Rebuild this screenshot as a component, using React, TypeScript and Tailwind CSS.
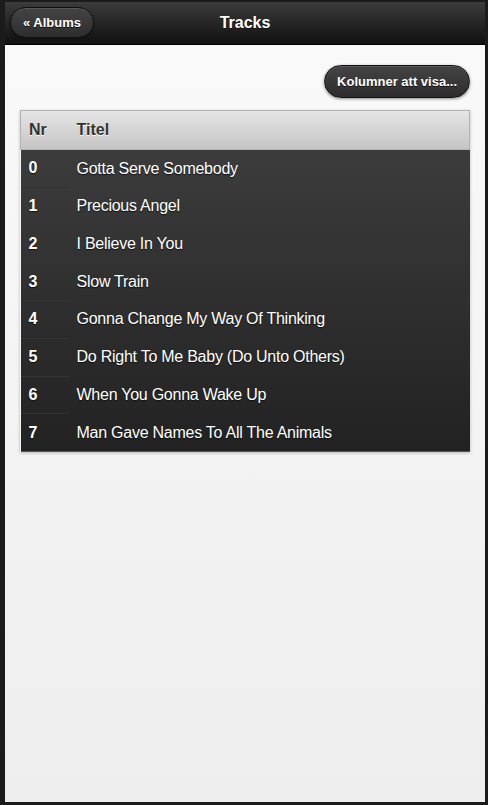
import React from 'react'

const tracks = [
  'Gotta Serve Somebody',
  'Precious Angel',
  'I Believe In You',
  'Slow Train',
  'Gonna Change My Way Of Thinking',
  'Do Right To Me Baby (Do Unto Others)',
  'When You Gonna Wake Up',
  'Man Gave Names To All The Animals',
]

export default function App() {
  return (
    <div className="h-[805px] w-[488px] bg-[#1b1b1b] pl-[5px] pr-[3px] pt-[2px] pb-[3px] font-['Liberation_Sans',Arial,sans-serif] overflow-hidden">
      <div className="flex h-full flex-col">
        {/* Header */}
        <header className="relative flex h-[43px] shrink-0 items-center justify-center border-b border-[#000] bg-gradient-to-b from-[#3c3c3c] to-[#111]">
          <button className="absolute left-[5px] top-[5px] flex h-[31px] items-center rounded-full border border-[#111] bg-gradient-to-b from-[#444] to-[#2d2d2d] px-[12px] text-[13px] font-bold text-white shadow-[0_1px_2px_rgba(0,0,0,0.4),inset_0_1px_0_rgba(255,255,255,0.1)] [text-shadow:0_1px_0_#111]">
            « Albums
          </button>
          <h1 className="text-[16px] font-bold text-white [text-shadow:0_1px_0_#111]">Tracks</h1>
        </header>

        {/* Content */}
        <main className="flex-1 bg-gradient-to-b from-[#f9f9f9] to-[#eee] px-[15px] pt-[20px]">
          <div className="flex justify-end">
            <button className="flex h-[33px] items-center rounded-full border border-[#111] bg-gradient-to-b from-[#444] to-[#2d2d2d] px-[12px] text-[13px] font-bold text-white shadow-[0_1px_3px_rgba(0,0,0,0.45),inset_0_1px_0_rgba(255,255,255,0.12)] [text-shadow:0_1px_0_#111]">
              Kolumner att visa...
            </button>
          </div>

          <table className="mt-[12px] w-full border-collapse shadow-[0_1px_3px_rgba(0,0,0,0.25)]">
            <thead>
              <tr className="h-[39px] bg-gradient-to-b from-[#e5e5e5] to-[#c4c4c4] text-left text-[16px] font-bold text-[#333] [text-shadow:0_1px_0_#fff]">
                <th className="w-[48px] border-y border-l border-[#b3b3b3] pl-[8px]">Nr</th>
                <th className="border-y border-r border-[#b3b3b3] pl-[8px]">Titel</th>
              </tr>
            </thead>
            <tbody className="bg-gradient-to-b from-[#3c3c3c] to-[#222] text-[16px] text-white [text-shadow:0_1px_1px_#111]">
              {tracks.map((title, i) => (
                <tr key={i} className="h-[37.75px]">
                  <th
                    className={`w-[48px] pl-[8px] text-left font-bold ${
                      i < tracks.length - 1 ? 'border-b border-[#333]' : ''
                    }`}
                  >
                    {i}
                  </th>
                  <td className="pl-[8px] tracking-[-0.25px]">{title}</td>
                </tr>
              ))}
            </tbody>
          </table>
        </main>
      </div>
    </div>
  )
}
